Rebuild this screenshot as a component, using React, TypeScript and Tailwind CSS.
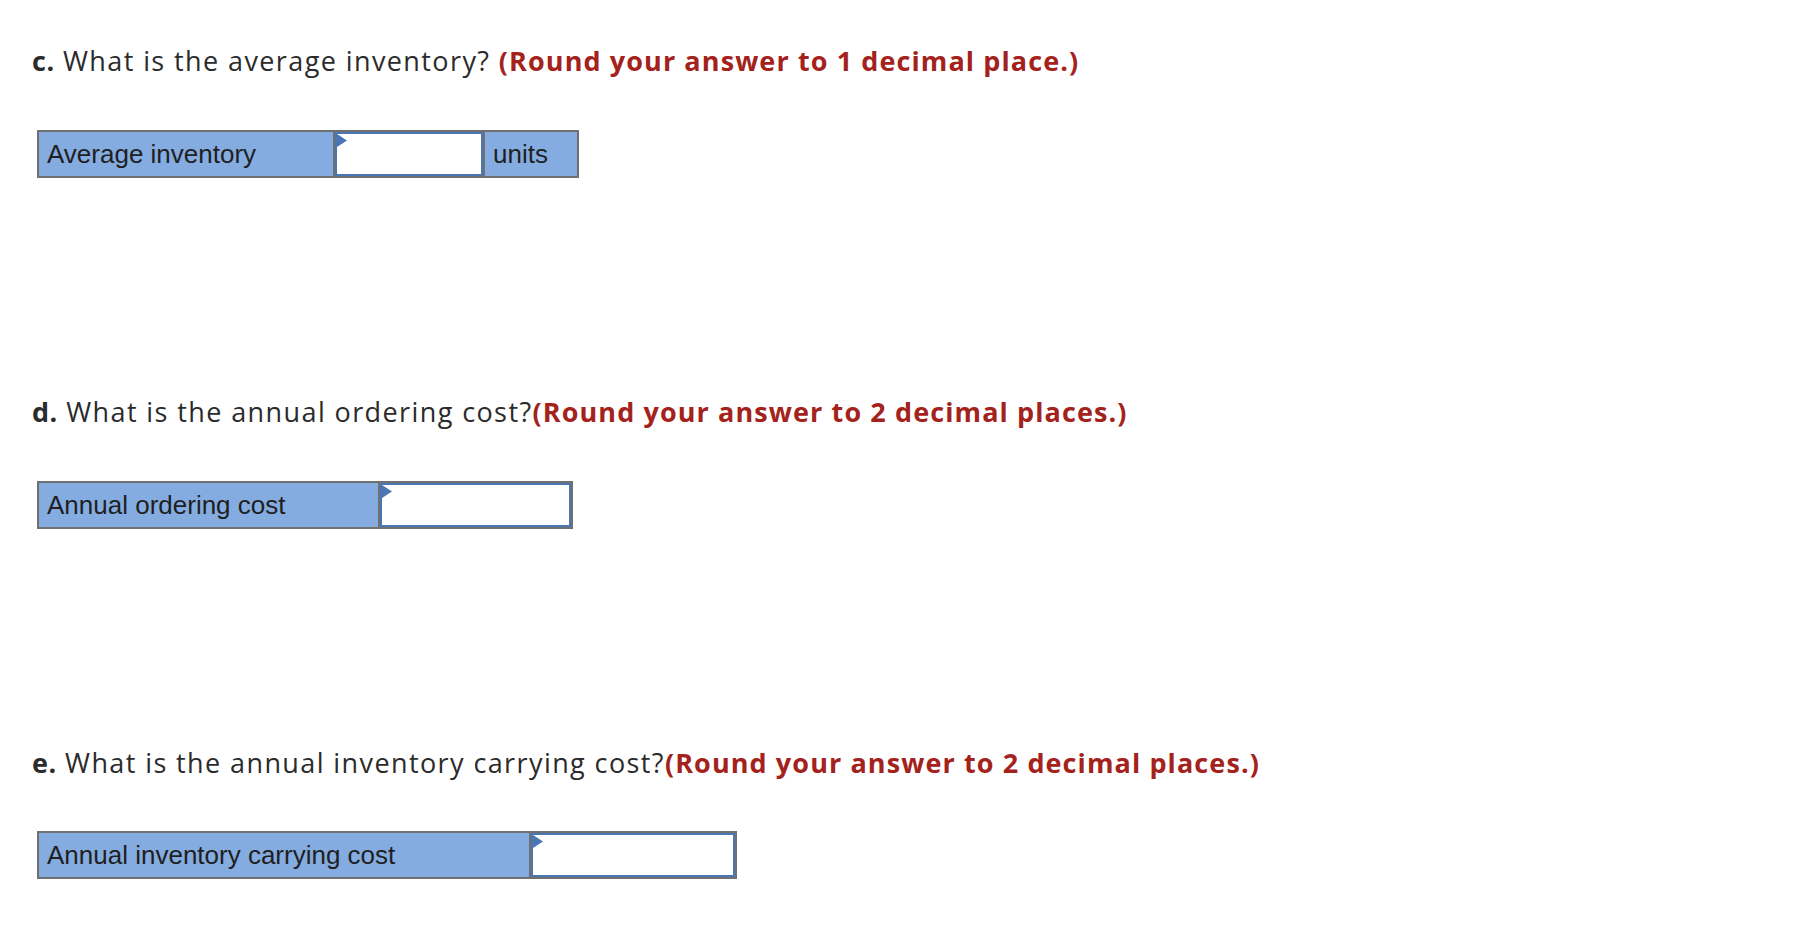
import React from "react";

const Tri = () => (
  <svg className="absolute left-0 top-0" width="10" height="13" viewBox="0 0 10 13">
    <polygon points="0,0 10,6.5 0,13" fill="#4a77b4" />
  </svg>
);

function Heading({ letter, q, note }: { letter: string; q: string; note: string }) {
  return (
    <div
      className="h-[32px] leading-[32px] text-[27px] tracking-[1.4px] text-[#2b2b2b] whitespace-nowrap"
      style={{ fontFamily: "'Open Sans', 'Noto Sans', sans-serif" }}
    >
      <span className="font-bold tracking-[0.5px]">{letter}</span>
      {q}
      <span className="font-bold tracking-[1.1px] text-[#a3221c]">{note}</span>
    </div>
  );
}

function Row({
  label,
  labelW,
  inputW,
  units,
}: {
  label: string;
  labelW: string;
  inputW: string;
  units?: boolean;
}) {
  return (
    <div
      className="ml-[5px] flex h-[48px] w-fit border-2 border-[#707070] text-[26px] text-[#1f1f1f]"
      style={{ fontFamily: "'Liberation Sans', Arial, sans-serif" }}
    >
      <div className={`${labelW} flex items-center bg-[#84ace0] pl-[8px]`}>{label}</div>
      <div className={`${inputW} relative border-l-2 border-[#707070]`}>
        <div className="relative h-full w-full border-2 border-[#4a77b4] bg-white">
          <Tri />
        </div>
      </div>
      {units && (
        <div className="flex w-[94px] items-center border-l-2 border-[#707070] bg-[#84ace0] pl-[8px]">
          units
        </div>
      )}
    </div>
  );
}

export default function App() {
  return (
    <div className="min-h-screen bg-white pl-[32px] pt-[45px]">
      <Heading
        letter="c."
        q=" What is the average inventory? "
        note="(Round your answer to 1 decimal place.)"
      />
      <div className="mt-[53px]">
        <Row label="Average inventory" labelW="w-[294px]" inputW="w-[150px]" units />
      </div>

      <div className="mt-[218px]">
        <Heading
          letter="d."
          q=" What is the annual ordering cost?"
          note="(Round your answer to 2 decimal places.)"
        />
      </div>
      <div className="mt-[53px]">
        <Row label="Annual ordering cost" labelW="w-[339px]" inputW="w-[193px]" />
      </div>

      <div className="mt-[218px]">
        <Heading
          letter="e."
          q=" What is the annual inventory carrying cost?"
          note="(Round your answer to 2 decimal places.)"
        />
      </div>
      <div className="mt-[52px]">
        <Row label="Annual inventory carrying cost" labelW="w-[490px]" inputW="w-[206px]" />
      </div>
    </div>
  );
}
